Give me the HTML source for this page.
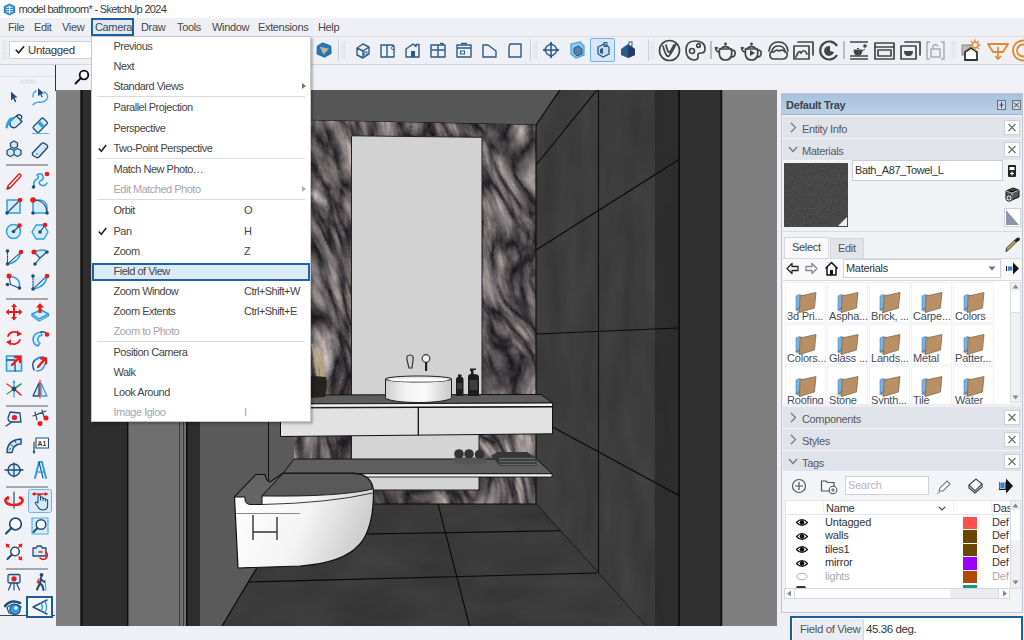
<!DOCTYPE html><html><head><meta charset="utf-8"><style>
*{margin:0;padding:0;box-sizing:border-box}
html,body{width:1024px;height:640px;overflow:hidden;background:#eff0f5;font-family:"Liberation Sans",sans-serif;font-size:11px;color:#333}
.a{position:absolute}
.t{position:absolute;white-space:nowrap;font-size:11px;letter-spacing:-0.45px}
#title{left:0;top:0;width:1024px;height:18px;background:#fff}
#menubar{left:0;top:18px;width:1024px;height:18px;background:#eef0f5}
#menubar span{position:absolute;top:3px;font-size:11px;letter-spacing:-0.35px;color:#474747}
#tb1{left:0;top:36px;width:1024px;height:29px;background:#eff0f5;border-top:1px solid #dcdee4;border-bottom:1px solid #d3d5db}
#row2{left:0;top:65px;width:1024px;height:26px;background:#f0f1f6}
#left{left:0;top:76px;width:55px;height:540px;background:#f1f2f7;border-bottom:1px solid #444;border-top:1px solid #e2e4ea}
#status{left:0;top:626px;width:1024px;height:14px;background:#eff0f5}
#tray{left:781px;top:93px;width:242px;height:520px;background:#f2f3f7;border-left:1px solid #c9ccd4}
#menu{left:91px;top:36px;width:220px;height:386px;background:#fff;border:1px solid #c6c6c6;box-shadow:2px 2px 2px rgba(0,0,0,.25)}
.mi{position:absolute;left:21.5px;font-size:11px;letter-spacing:-0.5px;color:#454545;white-space:nowrap}
.sc{position:absolute;left:152px;font-size:11px;letter-spacing:-0.55px;color:#454545;white-space:nowrap}
.dis{color:#a4a4ac}
.sep{position:absolute;left:5px;width:208px;height:1px;background:#dadada}
.vsep{position:absolute;width:1px;background:#d0d2d8}
.grip{position:absolute;width:5px;background-image:radial-gradient(#dcdee3 0.8px,transparent 0.9px);background-size:2.5px 2.5px}
</style></head><body>
<div id="title" class="a">
<svg class="a" style="left:3px;top:3px" width="13" height="13" viewBox="0 0 13 13"><path d="M6.5 0.5 L12.2 3.3 V9.7 L6.5 12.5 L0.8 9.7 V3.3Z" fill="#2f86c8"/><path d="M3.2 4.2 H9.8 M2.8 6.5 H10.2 M3.2 8.8 H9.8 M6.5 2.2 V10.8" stroke="#fff" stroke-width="0.9"/></svg>
<span class="t" style="left:18.5px;top:3px;font-size:11px;letter-spacing:-0.68px;color:#3a3a3a">model bathroom* - SketchUp 2024</span>
</div>
<div id="menubar" class="a">
<span style="left:8px">File</span>
<span style="left:34px">Edit</span>
<span style="left:62px">View</span>
<div class="a" style="left:91px;top:0;width:43px;height:18px;border:2px solid #1f5fa3;background:#dfe9f5"></div>
<span style="left:95px">Camera</span>
<span style="left:141px">Draw</span>
<span style="left:177px">Tools</span>
<span style="left:212px">Window</span>
<span style="left:258px">Extensions</span>
<span style="left:318px">Help</span>
</div>
<div id="tb1" class="a"></div>
<div class="grip" style="left:2px;top:40px;height:20px"></div>
<div class="a" style="left:9px;top:41px;width:110px;height:18px;background:#fff;border:1px solid #cfd1d6"></div>
<svg class="a" style="left:15px;top:45px" width="10" height="9" viewBox="0 0 10 9"><path d="M0.8 4.8 L3.6 7.8 L9.2 1.2" stroke="#222" stroke-width="1.6" fill="none"/></svg>
<span class="t" style="left:28px;top:44px;font-size:11.5px;letter-spacing:-0.4px;color:#3a3a3a">Untagged</span>
<svg class="a" style="left:316px;top:42px" width="16" height="16" viewBox="0 0 16 16"><path d="M6.5 0.8 L14.8 4 L15.2 11.5 L8.5 15.2 L1 12 L1.2 4.2Z" fill="#1f78bd" stroke="#1a5a8c" stroke-width="0.8"/><path d="M3.8 4.8 L13 6.8 L7.5 12.8Z" fill="#c7b48a"/></svg>
<div class="vsep" style="left:338px;top:39px;height:22px"></div>
<div class="grip" style="left:341px;top:41px;height:18px"></div>
<svg class="a" style="left:354px;top:42px" width="18" height="18" viewBox="0 0 18 18"><path d="M3 6 L9 2 L15 5 V12 L9 16 L3 13Z M3 6 L9 9 L15 5 M9 9 V16" stroke="#2b5a87" stroke-width="1.4" fill="none" stroke-linejoin="round"/><rect x="10" y="10" width="3" height="3" fill="none" stroke="#2b5a87" stroke-width="1"/></svg>
<svg class="a" style="left:379px;top:42px" width="18" height="18" viewBox="0 0 18 18"><path d="M2 3 H13 Q15 3 15 5 V15 H2Z M8 3 V15" stroke="#2b5a87" stroke-width="1.4" fill="none" stroke-linejoin="round"/><circle cx="14" cy="6" r="1.5" fill="#fff" stroke="#2b5a87" stroke-width="1"/></svg>
<svg class="a" style="left:404px;top:42px" width="18" height="18" viewBox="0 0 18 18"><path d="M2 15 V7 L9 2 L12 4.5 V2.5 H15 V15Z" stroke="#2b5a87" stroke-width="1.4" fill="none" stroke-linejoin="round"/><rect x="7" y="9" width="4" height="6" fill="#2b5a87"/></svg>
<svg class="a" style="left:429px;top:42px" width="18" height="18" viewBox="0 0 18 18"><rect x="2" y="3" width="14" height="12" stroke="#2b5a87" stroke-width="1.4" fill="none" stroke-linejoin="round"/><path d="M9 3 V15 M2 8 H16 M11 1.5 H14 V3" stroke="#2b5a87" stroke-width="1.4" fill="none" stroke-linejoin="round"/></svg>
<svg class="a" style="left:455px;top:42px" width="18" height="18" viewBox="0 0 18 18"><rect x="2" y="3" width="14" height="12" stroke="#2b5a87" stroke-width="1.4" fill="none" stroke-linejoin="round"/><path d="M2 6 H16 M6 1.5 H12" stroke="#2b5a87" stroke-width="1.4" fill="none" stroke-linejoin="round"/><rect x="5.5" y="9" width="4" height="3" fill="none" stroke="#2b5a87" stroke-width="1"/></svg>
<svg class="a" style="left:481px;top:42px" width="18" height="18" viewBox="0 0 18 18"><path d="M2 15 V3 H7 L15 9 V15Z" stroke="#2b5a87" stroke-width="1.4" fill="none" stroke-linejoin="round"/></svg>
<svg class="a" style="left:506px;top:42px" width="18" height="18" viewBox="0 0 18 18"><path d="M4 2 H15 V15 H3 V5Z" stroke="#2b5a87" stroke-width="1.4" fill="none" stroke-linejoin="round"/></svg>
<div class="vsep" style="left:530px;top:39px;height:22px"></div>
<div class="grip" style="left:533px;top:41px;height:18px"></div>
<svg class="a" style="left:542px;top:41px" width="18" height="18" viewBox="0 0 18 18"><circle cx="9" cy="9" r="5.5" stroke="#2b5a87" stroke-width="1.4" fill="none" stroke-linejoin="round"/><path d="M9 1 V17 M1 9 H17" stroke="#2b5a87" stroke-width="1.6"/><path d="M1 9 L3.5 7 V11Z M17 9 L14.5 7 V11Z M9 1 L7 3.5 H11Z M9 17 L7 14.5 H11Z" fill="#2b5a87"/></svg>
<svg class="a" style="left:568px;top:41px" width="18" height="18" viewBox="0 0 18 18"><path d="M3 3 L12 1 L16 5 V14 L8 17 L3 13Z" fill="#8cc9ee" stroke="#3aa3e3" stroke-width="1.2"/><path d="M6 7 L11 5 L14 8 V13 L9 15 L6 12Z" fill="#5b7fa0" stroke="#2b5a87" stroke-width="1"/></svg>
<div class="a" style="left:590px;top:38px;width:25px;height:24px;background:#d6e8f8;border:1px solid #6db1e8;border-radius:2px"></div>
<svg class="a" style="left:594px;top:41px" width="18" height="18" viewBox="0 0 18 18"><path d="M4 6 L10 3 L15 6 V13 L9 16 L4 13Z" fill="#c9dbe9" stroke="#2b5a87" stroke-width="1.3"/><path d="M6 8 L9 7 V13 L6 12Z" fill="#2b5a87"/><rect x="10" y="1.5" width="3" height="4" fill="none" stroke="#2b5a87" stroke-width="1"/></svg>
<svg class="a" style="left:619px;top:41px" width="18" height="18" viewBox="0 0 18 18"><path d="M2 8 L9 3 L16 8 V14 L9 17 L2 14Z" fill="#2b5a87"/><path d="M9 3 L16 8 V14 L9 17Z" fill="#1d3f63"/><rect x="10" y="1" width="3" height="4" fill="#fff" stroke="#2b5a87" stroke-width="1"/></svg>
<div class="vsep" style="left:648px;top:39px;height:22px"></div>
<div class="grip" style="left:650px;top:41px;height:18px"></div>
<svg class="a" style="left:658px;top:39px" width="23" height="23" viewBox="0 0 23 23"><circle cx="11.5" cy="11.5" r="10" stroke="#454545" stroke-width="1.7" fill="none" stroke-linejoin="round" stroke-linecap="round"/><path d="M5 7 Q8 19 11 17 Q14 13 18 5" stroke="#454545" stroke-width="1.7" fill="none" stroke-linejoin="round" stroke-linecap="round"/><path d="M8 6 Q10 15 12 13 Q14 10 16 6" stroke="#454545" stroke-width="1.7" fill="none" stroke-linejoin="round" stroke-linecap="round"/></svg>
<svg class="a" style="left:684px;top:39px" width="23" height="23" viewBox="0 0 23 23"><path d="M11 2 Q21 2 21 10 Q21 14 17 14 Q13 14 14 18 Q14 21 10 21 Q2 20 2 11 Q2 2 11 2Z" stroke="#454545" stroke-width="1.7" fill="none" stroke-linejoin="round" stroke-linecap="round"/><circle cx="8" cy="12" r="2.5" stroke="#454545" stroke-width="1.7" fill="none" stroke-linejoin="round" stroke-linecap="round"/><circle cx="14.5" cy="6.5" r="1.8" stroke="#454545" stroke-width="1.7" fill="none" stroke-linejoin="round" stroke-linecap="round"/></svg>
<div class="a" style="left:710px;top:41px;width:2px;height:18px;background:#bdbdbd"></div>
<svg class="a" style="left:714px;top:39px" width="23" height="23" viewBox="0 0 23 23"><path d="M5.5 10 Q4 21 11.5 21 Q19 21 17.5 10Z" stroke="#454545" stroke-width="1.7" fill="none" stroke-linejoin="round" stroke-linecap="round"/><path d="M6.5 10 Q11.5 5 16.5 10" stroke="#454545" stroke-width="1.7" fill="none" stroke-linejoin="round" stroke-linecap="round"/><circle cx="11.5" cy="5" r="1.4" fill="#454545"/><path d="M5.5 13 Q2 13 1.5 8.5 L3.5 9" stroke="#454545" stroke-width="1.7" fill="none" stroke-linejoin="round" stroke-linecap="round"/><path d="M17.5 11 Q22 11 21 15.5 Q20 18.5 16.5 18" stroke="#454545" stroke-width="1.7" fill="none" stroke-linejoin="round" stroke-linecap="round"/></svg>
<svg class="a" style="left:740px;top:39px" width="23" height="23" viewBox="0 0 23 23"><path d="M5.5 10 Q4 21 11.5 21 Q19 21 17.5 10Z" stroke="#454545" stroke-width="1.7" fill="none" stroke-linejoin="round" stroke-linecap="round"/><path d="M6.5 10 Q11.5 5 16.5 10" stroke="#454545" stroke-width="1.7" fill="none" stroke-linejoin="round" stroke-linecap="round"/><circle cx="11.5" cy="5" r="1.4" fill="#454545"/><path d="M5.5 13 Q2 13 1.5 8.5 L3.5 9" stroke="#454545" stroke-width="1.7" fill="none" stroke-linejoin="round" stroke-linecap="round"/><path d="M17.5 11 Q22 11 21 15.5 Q20 18.5 16.5 18" stroke="#454545" stroke-width="1.7" fill="none" stroke-linejoin="round" stroke-linecap="round"/><path d="M10 11 L15 14 L10 17Z" fill="#454545"/></svg>
<svg class="a" style="left:767px;top:39px" width="23" height="23" viewBox="0 0 23 23"><path d="M2 12 Q3 3 11.5 3 Q20 3 21 12 M5 12 Q6 7 11.5 7 Q17 7 18 12 M3 16 Q3 12 7 13 Q9 10 12 12 Q16 10 18 13 Q21 13 20 17 Q19 20 16 20 H7 Q3 20 3 16Z" stroke="#454545" stroke-width="1.7" fill="none" stroke-linejoin="round" stroke-linecap="round"/></svg>
<svg class="a" style="left:792px;top:39px" width="23" height="23" viewBox="0 0 23 23"><rect x="2" y="7" width="15" height="13" stroke="#454545" stroke-width="1.7" fill="none" stroke-linejoin="round" stroke-linecap="round"/><path d="M6 3 H21 V16" stroke="#454545" stroke-width="1.7" fill="none" stroke-linejoin="round" stroke-linecap="round"/><path d="M4 18 Q7 10 9 14 Q12 9 15 15" stroke="#454545" stroke-width="1.7" fill="none" stroke-linejoin="round" stroke-linecap="round"/></svg>
<svg class="a" style="left:818px;top:39px" width="23" height="23" viewBox="0 0 23 23"><path d="M19 7 A9 9 0 1 0 19 16" stroke="#454545" stroke-width="2.2" fill="none"/><path d="M12 7 A5 5 0 1 0 16 13 L12 12Z" fill="#454545"/></svg>
<div class="a" style="left:843px;top:41px;width:2px;height:18px;background:#bdbdbd"></div>
<svg class="a" style="left:848px;top:39px" width="23" height="23" viewBox="0 0 23 23"><path d="M2 3 H20 M2 20 H20 M2 17 H20" stroke="#454545" stroke-width="1.6"/><path d="M6 11 H14 Q14 15 12 16 H8 Q6 15 6 11Z M9 10 Q10 8 11 10 M14 12 L17 10" fill="#454545" stroke="#454545" stroke-width="1"/><circle cx="17" cy="7" r="1.8" fill="#454545"/></svg>
<svg class="a" style="left:873px;top:39px" width="23" height="23" viewBox="0 0 23 23"><rect x="2" y="4" width="19" height="16" stroke="#454545" stroke-width="1.7" fill="none" stroke-linejoin="round" stroke-linecap="round"/><path d="M2 8 H21" stroke="#454545" stroke-width="1.7" fill="none" stroke-linejoin="round" stroke-linecap="round"/><rect x="5" y="11" width="13" height="6" stroke="#454545" stroke-width="1.7" fill="none" stroke-linejoin="round" stroke-linecap="round"/></svg>
<svg class="a" style="left:899px;top:39px" width="23" height="23" viewBox="0 0 23 23"><rect x="2" y="7" width="15" height="13" stroke="#454545" stroke-width="1.7" fill="none" stroke-linejoin="round" stroke-linecap="round"/><path d="M6 3 H21 V16" stroke="#454545" stroke-width="1.7" fill="none" stroke-linejoin="round" stroke-linecap="round"/><path d="M5 12 H14 Q14 16 11 17 H8 Q5 16 5 12Z" fill="#454545"/></svg>
<svg class="a" style="left:925px;top:39px" width="21" height="23" viewBox="0 0 21 23"><path d="M5 3 H2 V20 H5 M16 3 H19 V20 H16" stroke="#a8a8a8" stroke-width="1.4" fill="none"/><rect x="6" y="10" width="9" height="8" stroke="#a8a8a8" stroke-width="1.4" fill="none"/><path d="M8 10 V7 Q10.5 4 13 7" stroke="#a8a8a8" stroke-width="1.4" fill="none"/></svg>
<div class="grip" style="left:951px;top:41px;height:18px"></div>
<svg class="a" style="left:959px;top:39px" width="24" height="23" viewBox="0 0 24 23"><rect x="3" y="6" width="8" height="10" fill="#bbb" stroke="#888"/><path d="M6 21 V13 L12 9 L18 13 V21Z" fill="#fff" stroke="#333" stroke-width="1.8"/><circle cx="16" cy="6" r="3" fill="none" stroke="#e0892e" stroke-width="1.5"/><path d="M16 0.5 V2 M16 10 V11.5 M10.5 6 H12 M20 6 H21.5 M12 2 L13 3 M19 9 L20 10 M20 2 L19 3" stroke="#e0892e" stroke-width="1.3"/></svg>
<svg class="a" style="left:986px;top:39px" width="24" height="23" viewBox="0 0 24 23"><path d="M2 5 H22 L17 13 H7Z" stroke="#e0892e" stroke-width="1.8" fill="none" stroke-linejoin="round"/><path d="M12 8 V20 M9 17 L12 20 L15 17" stroke="#e0892e" stroke-width="1.6" fill="none"/></svg>
<svg class="a" style="left:1011px;top:39px" width="13" height="23" viewBox="0 0 13 23"><circle cx="12" cy="11.5" r="10" stroke="#e0892e" stroke-width="1.8" fill="none"/><circle cx="12" cy="11.5" r="6" stroke="#e0892e" stroke-width="1.8" fill="none"/></svg>
<div id="row2" class="a"></div>
<div class="a" style="left:55px;top:65px;width:37px;height:26px;background:#f1f2f7;border-left:1px solid #333"></div>
<svg class="a" style="left:74px;top:69px" width="16" height="16" viewBox="0 0 16 16"><circle cx="10" cy="6" r="4.3" stroke="#111" stroke-width="1.8" fill="#fff"/><path d="M7 9 L1.5 14.5" stroke="#111" stroke-width="1.9" stroke-linecap="round"/></svg>
<div id="left" class="a"></div>
<div class="a" style="left:20px;top:79px;width:15px;height:5px;background-image:radial-gradient(#d8dadf 0.8px,transparent 0.9px);background-size:2.5px 2.5px"></div>
<div class="a" style="left:6px;top:164px;width:42px;height:2px;background:#a4a6ab"></div>
<div class="a" style="left:6px;top:297.5px;width:42px;height:2px;background:#a4a6ab"></div>
<div class="a" style="left:6px;top:404.5px;width:42px;height:2px;background:#a4a6ab"></div>
<div class="a" style="left:6px;top:485.5px;width:42px;height:2px;background:#a4a6ab"></div>
<div class="a" style="left:6px;top:567.5px;width:42px;height:2px;background:#a4a6ab"></div>
<div class="a" style="left:28.4px;top:489px;width:24px;height:24px;background:#d9e9f7;border:1px solid #73b3e7;border-radius:2.5px"></div>
<div class="a" style="left:26px;top:596px;width:26.5px;height:22px;border:2.5px solid #1c5a98;background:#f4f6fa"></div>
<svg class="a" style="left:3.6999999999999993px;top:87.4px" width="20" height="20" viewBox="0 0 20 20"><path d="M7 4.5 L13.5 10.5 L10.5 10.8 L12.3 14.5 L11 15.2 L9.2 11.5 L7 13.5Z" fill="#1f4d78"/></svg>
<svg class="a" style="left:30.0px;top:87.4px" width="20" height="20" viewBox="0 0 20 20"><path d="M8 1 L14 6.5 L11.3 6.8 L12.8 10 L11.7 10.6 L10.2 7.4 L8 9.3Z" fill="#1f4d78"/><path d="M14 5 Q19 7 17 12 Q14 16 8 15 Q4 16 2.5 18.5 M6 4 Q2 6 3.5 11" stroke="#2f9fe2" stroke-width="1.4" fill="none" stroke-linejoin="round" stroke-linecap="round" stroke-dasharray="1.5 1.3"/></svg>
<svg class="a" style="left:3.6999999999999993px;top:112.3px" width="20" height="20" viewBox="0 0 20 20"><path d="M7 8 L12.5 4 L18 9.5 L12 15 Q9 17 6.5 14 Q5 11 7 8Z" fill="#d6ebf8" stroke="#1f4d78" stroke-width="1.3" fill="none" stroke-linejoin="round" stroke-linecap="round"/><path d="M12.5 4 Q15 1.5 17.5 4 Q18.5 6 16 8" stroke="#1f4d78" stroke-width="1.2" fill="none" stroke-linejoin="round" stroke-linecap="round"/><path d="M8.5 5 Q2.5 6 1.5 16 L3.5 16.5 Q5 10 9.5 8Z" fill="#2f9fe2"/></svg>
<svg class="a" style="left:30.0px;top:113.5px" width="20" height="20" viewBox="0 0 20 20"><path d="M3.5 12.5 L11.5 4.5 Q12.5 3.5 13.5 4.5 L17 8 Q18 9 17 10 L9 18 Q8 18.8 7 18 L3.5 14.5 Q2.5 13.5 3.5 12.5Z" fill="#d6ebf8" stroke="#1f4d78" stroke-width="1.3" fill="none" stroke-linejoin="round" stroke-linecap="round"/><path d="M7 9 L12.5 14.5 L15 12 L9.5 6.5Z" fill="#2f9fe2"/><path d="M2.5 20 H18.5" stroke="#2f9fe2" stroke-width="1.5" fill="none" stroke-linejoin="round" stroke-linecap="round"/></svg>
<svg class="a" style="left:3.6999999999999993px;top:139.0px" width="20" height="20" viewBox="0 0 20 20"><path d="M10 2 L13.5 4 V7.5 L10 9.5 L6.5 7.5 V4Z M6.5 9.5 L10 11.5 V15.5 L6.5 17.5 L3 15.5 V11.5Z M13.5 9.5 L17 11.5 V15.5 L13.5 17.5 L10 15.5 V11.5Z" fill="#d6ebf8" stroke="#1f4d78" stroke-width="1.3" fill="none" stroke-linejoin="round" stroke-linecap="round"/></svg>
<svg class="a" style="left:30.0px;top:140.4px" width="20" height="20" viewBox="0 0 20 20"><path d="M2.5 13 L11.5 3.5 Q12.5 2.5 14 3 L17 5 Q18 6 17.5 7.5 L9 17 Q8 18 6.5 17.5 L3 15.5 Q2 14.5 2.5 13Z" fill="#d6ebf8" stroke="#1f4d78" stroke-width="1.4" fill="none" stroke-linejoin="round" stroke-linecap="round"/><circle cx="7" cy="14" r="0.9" fill="#2f9fe2"/></svg>
<svg class="a" style="left:3.6999999999999993px;top:170.5px" width="20" height="20" viewBox="0 0 20 20"><path d="M4 15 L14.5 3.5 Q15.5 2.5 16.5 3.5 Q17.5 4.5 16.5 5.5 L6 17 L3 18Z" fill="#fff" stroke="#f01818" stroke-width="1.4" fill="none" stroke-linejoin="round" stroke-linecap="round"/><path d="M3 18 L4 15 L6 17Z" fill="#1f4d78"/></svg>
<svg class="a" style="left:30.0px;top:170.5px" width="20" height="20" viewBox="0 0 20 20"><path d="M4 15 Q3 10 7 8 Q10 6 7 4 Q11 1 13 5 Q14 9 10 10 Q8 12 11 14 Q15 16 17 12" stroke="#2f9fe2" stroke-width="1.6" fill="none" stroke-linejoin="round" stroke-linecap="round"/><circle cx="3.5" cy="16" r="1.8" fill="#1f4d78"/><circle cx="17" cy="3" r="2.3" fill="#f01818"/></svg>
<svg class="a" style="left:3.6999999999999993px;top:195.5px" width="20" height="20" viewBox="0 0 20 20"><rect x="3" y="4" width="13" height="13" fill="#d6ebf8" stroke="#2f9fe2" stroke-width="1.5" fill="none" stroke-linejoin="round" stroke-linecap="round"/><path d="M3 17 L16 4" stroke="#1f4d78" stroke-width="1.2" fill="none" stroke-linejoin="round" stroke-linecap="round"/><circle cx="3" cy="17" r="1.8" fill="#1f4d78"/><circle cx="16" cy="4" r="2.3" fill="#f01818"/></svg>
<svg class="a" style="left:30.0px;top:195.5px" width="20" height="20" viewBox="0 0 20 20"><path d="M3 17 V4 H9 Q16 4 17 11 V17Z" fill="#d6ebf8" stroke="#2f9fe2" stroke-width="1.5" fill="none" stroke-linejoin="round" stroke-linecap="round"/><path d="M3 4 Q16 4 17 17" stroke="#1f4d78" stroke-width="1.2" fill="none" stroke-linejoin="round" stroke-linecap="round"/><circle cx="3" cy="4" r="2.8" fill="#f01818"/><circle cx="3" cy="17" r="1.8" fill="#1f4d78"/><circle cx="17" cy="17" r="1.8" fill="#1f4d78"/></svg>
<svg class="a" style="left:3.6999999999999993px;top:220.5px" width="20" height="20" viewBox="0 0 20 20"><circle cx="9.5" cy="10.5" r="7" fill="#d6ebf8" stroke="#2f9fe2" stroke-width="1.5" fill="none" stroke-linejoin="round" stroke-linecap="round"/><path d="M9.5 10.5 L15 5" stroke="#1f4d78" stroke-width="1.1" fill="none" stroke-linejoin="round" stroke-linecap="round"/><circle cx="9.5" cy="10.5" r="1.8" fill="#1f4d78"/><circle cx="15.5" cy="4.5" r="2.3" fill="#f01818"/></svg>
<svg class="a" style="left:30.0px;top:220.5px" width="20" height="20" viewBox="0 0 20 20"><path d="M6 4 H14 L18 11 L14 18 H6 L2 11Z" fill="#d6ebf8" stroke="#2f9fe2" stroke-width="1.5" fill="none" stroke-linejoin="round" stroke-linecap="round"/><path d="M10 11 L15 4" stroke="#1f4d78" stroke-width="1.1" fill="none" stroke-linejoin="round" stroke-linecap="round"/><circle cx="10" cy="11" r="1.8" fill="#1f4d78"/><circle cx="15" cy="4" r="2.3" fill="#f01818"/></svg>
<svg class="a" style="left:3.6999999999999993px;top:246.5px" width="20" height="20" viewBox="0 0 20 20"><path d="M3.5 17 Q14 16 17 5" stroke="#2f9fe2" stroke-width="1.6" fill="none" stroke-linejoin="round" stroke-linecap="round"/><path d="M3.5 4 V17 M3.5 17 L17 5" stroke="#1f4d78" stroke-width="1.1" fill="none" stroke-linejoin="round" stroke-linecap="round" stroke-dasharray="1.4 1.2"/><circle cx="3.5" cy="4" r="1.8" fill="#1f4d78"/><circle cx="3.5" cy="17" r="1.8" fill="#1f4d78"/><circle cx="17" cy="5" r="2.3" fill="#f01818"/></svg>
<svg class="a" style="left:30.0px;top:246.5px" width="20" height="20" viewBox="0 0 20 20"><path d="M4 5 Q14 1 17 5 L10 17Z" fill="#d6ebf8"/><path d="M4 5 Q14 1 17 5" stroke="#2f9fe2" stroke-width="1.6" fill="none" stroke-linejoin="round" stroke-linecap="round"/><path d="M4 5 L10 11 L17 5 M10 11 L5 17" stroke="#1f4d78" stroke-width="1.1" fill="none" stroke-linejoin="round" stroke-linecap="round"/><circle cx="4" cy="5" r="2.5" fill="#f01818"/><circle cx="17" cy="5" r="1.8" fill="#1f4d78"/><circle cx="5" cy="17" r="1.8" fill="#1f4d78"/></svg>
<svg class="a" style="left:3.6999999999999993px;top:271.5px" width="20" height="20" viewBox="0 0 20 20"><path d="M5 4 Q18 6 15 16" stroke="#2f9fe2" stroke-width="1.6" fill="none" stroke-linejoin="round" stroke-linecap="round"/><path d="M5 4 L6.5 12.5 L15 16" stroke="#1f4d78" stroke-width="1.1" fill="none" stroke-linejoin="round" stroke-linecap="round"/><circle cx="5" cy="4" r="2.5" fill="#f01818"/><circle cx="3.5" cy="12.5" r="1.8" fill="#1f4d78"/><circle cx="15.5" cy="16" r="1.8" fill="#1f4d78"/></svg>
<svg class="a" style="left:30.0px;top:271.5px" width="20" height="20" viewBox="0 0 20 20"><path d="M3 17 V5 Q15 5 17 4 Q17 14 3 17Z" fill="#d6ebf8"/><path d="M3 4 V17 M3 17 L17 4" stroke="#1f4d78" stroke-width="1.1" fill="none" stroke-linejoin="round" stroke-linecap="round" stroke-dasharray="1.4 1.2"/><path d="M3 17 Q16 15 17 4" stroke="#2f9fe2" stroke-width="1.6" fill="none" stroke-linejoin="round" stroke-linecap="round"/><circle cx="3" cy="4" r="1.8" fill="#1f4d78"/><circle cx="3" cy="17" r="1.8" fill="#1f4d78"/><circle cx="17" cy="4" r="2.3" fill="#f01818"/></svg>
<svg class="a" style="left:3.6999999999999993px;top:301.7px" width="20" height="20" viewBox="0 0 20 20"><path d="M10 1.5 L13 5 H11 V9 H15 V7 L18.5 10 L15 13 V11 H11 V15 H13 L10 18.5 L7 15 H9 V11 H5 V13 L1.5 10 L5 7 V9 H9 V5 H7Z" fill="#f01818"/></svg>
<svg class="a" style="left:30.0px;top:301.7px" width="20" height="20" viewBox="0 0 20 20"><path d="M2 12 L11 8 L18.5 12 L9 17Z" fill="#d6ebf8" stroke="#2f9fe2" stroke-width="1.5" fill="none" stroke-linejoin="round" stroke-linecap="round"/><path d="M2 12 V14 L9 19 L18.5 14 V12" stroke="#2f9fe2" stroke-width="1.3" fill="none" stroke-linejoin="round" stroke-linecap="round"/><path d="M10 1 L14 5.5 H11.5 V11 H8.5 V5.5 H6Z" fill="#f01818"/></svg>
<svg class="a" style="left:3.6999999999999993px;top:328.4px" width="20" height="20" viewBox="0 0 20 20"><path d="M15.5 6 A7 7 0 0 0 4 8" stroke="#f01818" stroke-width="1.8" fill="none" stroke-linejoin="round" stroke-linecap="round"/><path d="M4.5 14 A7 7 0 0 0 16 12" stroke="#f01818" stroke-width="1.8" fill="none" stroke-linejoin="round" stroke-linecap="round"/><path d="M13 2.5 L18 6 L13 8.5Z M7 17.5 L2 14 L7 11.5Z" fill="#f01818"/></svg>
<svg class="a" style="left:30.0px;top:328.4px" width="20" height="20" viewBox="0 0 20 20"><path d="M11 4 Q3 5 3 12 Q4 17 8 18 L10 15 Q7 13 8 10 Q9 7 12 7.5Z" fill="#d6ebf8" stroke="#2f9fe2" stroke-width="1.5" fill="none" stroke-linejoin="round" stroke-linecap="round"/><path d="M11 4 Q15 3 17 6" stroke="#1f4d78" stroke-width="1.3" fill="none" stroke-linejoin="round" stroke-linecap="round"/><circle cx="17" cy="6.5" r="2.3" fill="#f01818"/></svg>
<svg class="a" style="left:3.6999999999999993px;top:353.3px" width="20" height="20" viewBox="0 0 20 20"><rect x="2.5" y="3" width="15" height="15" fill="#d6ebf8" stroke="#2f9fe2" stroke-width="1.6" fill="none" stroke-linejoin="round" stroke-linecap="round"/><path d="M2.5 7 H11 V18" stroke="#1f4d78" stroke-width="1.3" fill="none" stroke-linejoin="round" stroke-linecap="round"/><path d="M8 12 L15 5 M11 4 H16 V9" stroke="#f01818" stroke-width="2.4" fill="none" stroke-linejoin="round" stroke-linecap="round"/></svg>
<svg class="a" style="left:30.0px;top:353.3px" width="20" height="20" viewBox="0 0 20 20"><path d="M4 17 Q0 8 9 5" stroke="#1f4d78" stroke-width="1.4" fill="none" stroke-linejoin="round" stroke-linecap="round"/><path d="M7 18 Q13 18 15 11" stroke="#2f9fe2" stroke-width="1.6" fill="none" stroke-linejoin="round" stroke-linecap="round"/><path d="M5 7 Q11 2 15 5" stroke="#2f9fe2" stroke-width="1.6" fill="none" stroke-linejoin="round" stroke-linecap="round"/><path d="M8 14 L14 7 M11 5.5 H16 V10.5" stroke="#f01818" stroke-width="2.3" fill="none" stroke-linejoin="round" stroke-linecap="round"/></svg>
<svg class="a" style="left:3.6999999999999993px;top:379.0px" width="20" height="20" viewBox="0 0 20 20"><path d="M10 10 V2 M10 10 V18" stroke="#2f9fe2" stroke-width="1.2" fill="none" stroke-linejoin="round" stroke-linecap="round"/><path d="M10 10 L17 5" stroke="#27a34a" stroke-width="1.6" fill="none" stroke-linejoin="round" stroke-linecap="round"/><path d="M10 10 L3 15" stroke="#27a34a" stroke-width="1.2" fill="none" stroke-linejoin="round" stroke-linecap="round" stroke-dasharray="1 1"/><path d="M10 10 L17 16" stroke="#f01818" stroke-width="1.6" fill="none" stroke-linejoin="round" stroke-linecap="round"/><path d="M10 10 L3 5" stroke="#f01818" stroke-width="1.2" fill="none" stroke-linejoin="round" stroke-linecap="round" stroke-dasharray="1 1"/><path d="M10 1 L8.5 4 H11.5Z" fill="#2f9fe2"/><circle cx="10" cy="10" r="2.4" fill="#1f4d78"/></svg>
<svg class="a" style="left:30.0px;top:379.0px" width="20" height="20" viewBox="0 0 20 20"><path d="M9 4 L3 17 H9Z" fill="#d6ebf8" stroke="#1f4d78" stroke-width="1.3" fill="none" stroke-linejoin="round" stroke-linecap="round"/><path d="M11 4 L17 17 H11Z" fill="#d6ebf8" stroke="#2f9fe2" stroke-width="1.3" fill="none" stroke-linejoin="round" stroke-linecap="round"/><path d="M10 1 V19" stroke="#f01818" stroke-width="1.1" fill="none" stroke-linejoin="round" stroke-linecap="round" stroke-dasharray="1.4 1"/></svg>
<svg class="a" style="left:3.6999999999999993px;top:408.7px" width="20" height="20" viewBox="0 0 20 20"><path d="M6 3 L16 4 L17 13 L8 13 Q4 13 4 9Z" fill="#d6ebf8" stroke="#1f4d78" stroke-width="1.3" fill="none" stroke-linejoin="round" stroke-linecap="round"/><circle cx="10.5" cy="8.5" r="2.6" fill="#f01818"/><path d="M8 13 L2 17" stroke="#1f4d78" stroke-width="1.3" fill="none" stroke-linejoin="round" stroke-linecap="round"/></svg>
<svg class="a" style="left:30.0px;top:408.7px" width="20" height="20" viewBox="0 0 20 20"><path d="M3 7 L16 2 M5 3 L7 11 M12 1 L14 8" stroke="#1f4d78" stroke-width="1.1" fill="none" stroke-linejoin="round" stroke-linecap="round"/><path d="M8 5 L10 4" stroke="#1f4d78" stroke-width="0.9" fill="none" stroke-linejoin="round" stroke-linecap="round"/><circle cx="16" cy="9" r="2.5" fill="#f01818"/><circle cx="10" cy="14.5" r="2.5" fill="#f01818"/></svg>
<svg class="a" style="left:3.6999999999999993px;top:434.5px" width="20" height="20" viewBox="0 0 20 20"><path d="M3 17.5 Q3 5 17 4 L17 9 Q9 9 8 17.5Z" fill="#d6ebf8" stroke="#1f4d78" stroke-width="1.5" fill="none" stroke-linejoin="round" stroke-linecap="round"/><path d="M5 15 L7 13 M7 10 L9 11 M11 6 L12 8" stroke="#1f4d78" stroke-width="1" fill="none" stroke-linejoin="round" stroke-linecap="round"/></svg>
<svg class="a" style="left:30.0px;top:434.5px" width="20" height="20" viewBox="0 0 20 20"><rect x="6" y="3" width="12.5" height="10" fill="#fff" stroke="#1f4d78" stroke-width="1.1" fill="none" stroke-linejoin="round" stroke-linecap="round"/><text x="7.6" y="11" font-size="6.8" font-family="Liberation Sans" font-weight="bold" fill="#333">A1</text><path d="M4 7 V18" stroke="#1f4d78" stroke-width="1.2" fill="none" stroke-linejoin="round" stroke-linecap="round"/><path d="M2.5 16 L4 19 L5.5 16Z" fill="#1f4d78"/></svg>
<svg class="a" style="left:3.6999999999999993px;top:460.3px" width="20" height="20" viewBox="0 0 20 20"><circle cx="10" cy="10" r="6" fill="#d6ebf8" stroke="#1f4d78" stroke-width="1.4" fill="none" stroke-linejoin="round" stroke-linecap="round"/><path d="M1 10 H19 M10 3 V17" stroke="#1f4d78" stroke-width="1.3" fill="none" stroke-linejoin="round" stroke-linecap="round"/><path d="M18.5 10 L15.5 8 V12Z" fill="#1f4d78"/></svg>
<svg class="a" style="left:30.0px;top:460.3px" width="20" height="20" viewBox="0 0 20 20"><path d="M5 18 L9 2 H12 L16 18" stroke="#2f9fe2" stroke-width="2" fill="none" stroke-linejoin="round" stroke-linecap="round"/><path d="M9 2 L13 18" stroke="#1f4d78" stroke-width="1.1" fill="none" stroke-linejoin="round" stroke-linecap="round"/><path d="M7 12 H14" stroke="#2f9fe2" stroke-width="1.4" fill="none" stroke-linejoin="round" stroke-linecap="round"/></svg>
<svg class="a" style="left:3.6999999999999993px;top:489.5px" width="20" height="20" viewBox="0 0 20 20"><path d="M10 2 V18" stroke="#1f4d78" stroke-width="1.2" fill="none" stroke-linejoin="round" stroke-linecap="round"/><path d="M4 7.5 Q1 9 1.5 11 Q3 15 10 15 Q17 15 18.5 11 Q19 9 16 7.5" stroke="#f01818" stroke-width="2.6" fill="none" stroke-linejoin="round" stroke-linecap="round"/><path d="M1 9 L4 6 L5 10Z" fill="#f01818"/></svg>
<svg class="a" style="left:30.0px;top:491.0px" width="20" height="20" viewBox="0 0 20 20"><path d="M8 11 V5.5 Q8 4 9.3 4 Q10.5 4 10.5 5.5 V9 V7 Q10.5 6 11.7 6 Q13 6 13 7 V9.5 V8 Q13 7.2 14.2 7.2 Q15.5 7.2 15.5 8.2 V10 V9.3 Q15.5 8.5 16.5 8.5 Q17.6 8.5 17.6 9.5 V14 Q17.6 19 13 19 Q9.5 19 8 16 L5.5 12.5 Q5 11 6.5 11 Q7.5 11 8 12Z" fill="#d6ebf8" stroke="#1f4d78" stroke-width="1.1" fill="none" stroke-linejoin="round" stroke-linecap="round"/><path d="M3 3 H17" stroke="#f01818" stroke-width="1.5" fill="none" stroke-linejoin="round" stroke-linecap="round"/><path d="M2 3 L5 1 V5Z M18 3 L15 1 V5Z" fill="#f01818"/></svg>
<svg class="a" style="left:3.6999999999999993px;top:516.3px" width="20" height="20" viewBox="0 0 20 20"><circle cx="11.5" cy="8" r="5.8" fill="#fff" stroke="#1f4d78" stroke-width="1.7" fill="none" stroke-linejoin="round" stroke-linecap="round"/><path d="M7.5 12 L2 17.5" stroke="#1f4d78" stroke-width="2.2" fill="none" stroke-linejoin="round" stroke-linecap="round"/></svg>
<svg class="a" style="left:30.0px;top:516.3px" width="20" height="20" viewBox="0 0 20 20"><rect x="2" y="2" width="16" height="16" fill="#d6ebf8" stroke="#2f9fe2" stroke-width="1.1" fill="none" stroke-linejoin="round" stroke-linecap="round" stroke-dasharray="1.4 1.2"/><circle cx="11" cy="8.5" r="4.8" fill="#fff" stroke="#1f4d78" stroke-width="1.5" fill="none" stroke-linejoin="round" stroke-linecap="round"/><path d="M7.5 12 L3.5 16" stroke="#1f4d78" stroke-width="2" fill="none" stroke-linejoin="round" stroke-linecap="round"/></svg>
<svg class="a" style="left:3.6999999999999993px;top:542.0px" width="20" height="20" viewBox="0 0 20 20"><circle cx="11" cy="9.5" r="4.3" fill="#fff" stroke="#1f4d78" stroke-width="1.5" fill="none" stroke-linejoin="round" stroke-linecap="round"/><path d="M8 12.5 L3.5 17" stroke="#1f4d78" stroke-width="1.9" fill="none" stroke-linejoin="round" stroke-linecap="round"/><path d="M1.5 1.5 L6 2.5 L2.5 6Z M18.5 1.5 L14 2.5 L17.5 6Z M18.5 18.5 L14 17.5 L17.5 14Z" fill="#f01818"/><path d="M3 3 L5 5 M17 3 L15 5 M17 17 L15 15" stroke="#f01818" stroke-width="1.5" fill="none" stroke-linejoin="round" stroke-linecap="round"/></svg>
<svg class="a" style="left:30.0px;top:542.0px" width="20" height="20" viewBox="0 0 20 20"><path d="M3 6 H6 L7.5 4 H11 L12.5 6 H16 V14 H3Z" fill="#d6ebf8" stroke="#1f4d78" stroke-width="1.3" fill="none" stroke-linejoin="round" stroke-linecap="round"/><path d="M9 10 H12" stroke="#f01818" stroke-width="1.4" fill="none" stroke-linejoin="round" stroke-linecap="round"/><path d="M16 10 Q19 14 15 17 Q12 18 10 16" stroke="#f01818" stroke-width="1.6" fill="none" stroke-linejoin="round" stroke-linecap="round"/></svg>
<svg class="a" style="left:3.6999999999999993px;top:572.0px" width="20" height="20" viewBox="0 0 20 20"><rect x="4" y="2.5" width="12" height="8.5" rx="1.5" fill="#d6ebf8" stroke="#1f4d78" stroke-width="1.3" fill="none" stroke-linejoin="round" stroke-linecap="round"/><circle cx="10" cy="6.8" r="2.6" fill="#f01818"/><path d="M7.5 11 L4.5 18 M10 11 V18 M12.5 11 L15.5 18" stroke="#1f4d78" stroke-width="1.2" fill="none" stroke-linejoin="round" stroke-linecap="round"/></svg>
<svg class="a" style="left:30.0px;top:572.0px" width="20" height="20" viewBox="0 0 20 20"><circle cx="11.5" cy="3" r="1.9" fill="#1f4d78"/><path d="M11 5.5 L10 11 L7 17.5 M10 11 L12.5 14 L13.5 18 M11 7.5 L14.5 10" stroke="#1f4d78" stroke-width="2.1" fill="none" stroke-linejoin="round" stroke-linecap="round"/><path d="M8.5 5.5 L6.5 11 L9 11.5Z" fill="#f01818"/><path d="M15 8 L16 18.5" stroke="#2f9fe2" stroke-width="1" fill="none" stroke-linejoin="round" stroke-linecap="round"/></svg>
<svg class="a" style="left:3.6999999999999993px;top:598.0px" width="20" height="20" viewBox="0 0 20 20"><path d="M3 9.5 Q10 3 17 9 Q12 18 5 15Z" fill="#fff" stroke="#1f4d78" stroke-width="1.2" fill="none" stroke-linejoin="round" stroke-linecap="round"/><circle cx="11" cy="11.5" r="5.2" fill="#2f9fe2" stroke="#1f4d78" stroke-width="1.1"/><circle cx="12" cy="10" r="1.8" fill="#fff"/><path d="M1 8 Q7 1 16 5" stroke="#1f4d78" stroke-width="2.6" fill="none" stroke-linejoin="round" stroke-linecap="round"/><path d="M1 8 L3 6" stroke="#1f4d78" stroke-width="2" fill="none" stroke-linejoin="round" stroke-linecap="round"/></svg>
<svg class="a" style="left:29.5px;top:597.0px" width="20" height="20" viewBox="0 0 20 20"><path d="M17 3 L3 10 L17 17" stroke="#1f4d78" stroke-width="1.4" fill="none" stroke-linejoin="round" stroke-linecap="round"/><path d="M11 6 Q13.5 10 11 14 M15 4.5 Q18 10 15 15.5" stroke="#2f9fe2" stroke-width="1.5" fill="none" stroke-linejoin="round" stroke-linecap="round" stroke-dasharray="2 1.1"/></svg>
<svg class="a" style="left:56px;top:90px" width="721" height="536" viewBox="56 90 721 536">
<defs>
<filter id="marb" x="240" y="60" width="360" height="500" filterUnits="userSpaceOnUse" color-interpolation-filters="sRGB">
<feTurbulence type="fractalNoise" baseFrequency="0.014 0.007" numOctaves="2" seed="4" result="low"/>
<feTurbulence type="turbulence" baseFrequency="0.055 0.018" numOctaves="5" seed="9" result="hi"/>
<feDisplacementMap in="hi" in2="low" scale="60" xChannelSelector="R" yChannelSelector="G" result="d"/>
<feColorMatrix in="d" type="matrix" values="0.92 0 0 0 0.05  0.87 0 0 0 0.045  0.83 0 0 0 0.065  0 0 0 0 1"/>
</filter>
<filter id="wallt" x="56" y="90" width="721" height="536" filterUnits="userSpaceOnUse" color-interpolation-filters="sRGB">
<feTurbulence type="fractalNoise" baseFrequency="0.05 0.012" numOctaves="3" seed="3" result="t"/>
<feColorMatrix in="t" type="matrix" values="0.14 0 0 0 0.17  0.14 0 0 0 0.17  0.14 0 0 0 0.17  0 0 0 0 1"/>
</filter>
<filter id="floort" x="56" y="90" width="721" height="536" filterUnits="userSpaceOnUse" color-interpolation-filters="sRGB">
<feTurbulence type="fractalNoise" baseFrequency="0.015 0.04" numOctaves="3" seed="17" result="t"/>
<feColorMatrix in="t" type="matrix" values="0.13 0 0 0 0.165  0.13 0 0 0 0.165  0.13 0 0 0 0.165  0 0 0 0 1"/>
</filter>
<clipPath id="cpMarble"><polygon points="294,120 536,125 536,504 294,504"/></clipPath>
<clipPath id="cpRW"><polygon points="536,125 559,90 678,90 678,626 646,626 536,504"/></clipPath>
<clipPath id="cpFloor"><polygon points="295,504 536,504 646,626 222,626"/></clipPath>
</defs>
<rect x="56" y="90" width="721" height="536" fill="#2d2d2d"/>
<rect x="56" y="90" width="24.5" height="536" fill="#7f7f7f"/>
<rect x="80.5" y="90" width="2" height="536" fill="#121212"/>
<rect x="127" y="90" width="1.5" height="536" fill="#0e0e0e"/>
<rect x="128.5" y="90" width="58" height="536" fill="#6f6f6f"/>
<rect x="179" y="90" width="1" height="536" fill="#3a3a3a"/>
<rect x="183" y="90" width="1" height="536" fill="#3a3a3a"/>
<rect x="186" y="90" width="1.6" height="536" fill="#0e0e0e"/>
<rect x="200" y="90" width="336" height="536" fill="#5a5a5a"/>
<!-- ceiling -->
<polygon points="200,90 559,90 536,125 294,120 200,118" fill="#565656"/>
<line x1="294" y1="120" x2="536" y2="125" stroke="#111" stroke-width="1"/>
<!-- marble back wall -->
<g clip-path="url(#cpMarble)"><g transform="rotate(-18 415 310)"><rect x="250" y="70" width="340" height="480" filter="url(#marb)"/></g></g>
<!-- right wall -->
<g clip-path="url(#cpRW)"><rect x="536" y="90" width="142" height="536" fill="#3d3d3d"/><rect x="536" y="90" width="142" height="536" filter="url(#wallt)" opacity="0.5"/>
<rect x="655" y="90" width="23" height="536" fill="#2a2a2a" opacity="0.85"/></g>
<rect x="678" y="90" width="2" height="536" fill="#101010"/>
<rect x="680" y="90" width="40.5" height="536" fill="#2f2f2f"/>
<rect x="720.5" y="90" width="1.8" height="536" fill="#101010"/>
<rect x="722.3" y="90" width="55" height="536" fill="#7f7f7f"/>
<g stroke="#0a0a0a" stroke-width="1.1" fill="none">
<line x1="536" y1="125" x2="560" y2="90"/>
<line x1="536" y1="125" x2="536" y2="504"/>
<line x1="598.5" y1="90" x2="598.5" y2="573"/>
<line x1="536" y1="165" x2="597" y2="90"/>
<line x1="536" y1="250" x2="679" y2="159.5"/>
<line x1="536" y1="334" x2="678" y2="328"/>
<line x1="536" y1="418" x2="679" y2="495.5"/>
<line x1="536" y1="504" x2="646" y2="626"/>
</g>
<!-- mirror panel -->
<polygon points="351.5,135.8 482,137.3 482,406 351.5,406" fill="#d2d2d2" stroke="#222" stroke-width="1"/><rect x="351.5" y="430" width="127.5" height="60" fill="#d4d4d4" stroke="#222" stroke-width="1"/>
<!-- floor -->
<g clip-path="url(#cpFloor)"><rect x="200" y="504" width="450" height="122" fill="#3a3a3a"/><rect x="200" y="504" width="450" height="122" filter="url(#floort)" opacity="0.5"/></g>
<g stroke="#0a0a0a" stroke-width="1.1" fill="none">
<line x1="295" y1="504" x2="536" y2="504"/>
<line x1="295" y1="504" x2="222" y2="626"/>
<line x1="277" y1="535.5" x2="560" y2="530.8"/>
<line x1="249" y1="582" x2="597" y2="573"/>
<line x1="438" y1="504" x2="469.5" y2="626"/>
</g>
<line x1="268.5" y1="90" x2="268.5" y2="482" stroke="#111" stroke-width="1"/>
<!-- vanity top -->
<polygon points="282,395 541,394.5 552.5,403 280,404" fill="#5c5c5c" stroke="#111" stroke-width="1"/>
<polygon points="280,404 552.5,403 552.5,406.5 280,407.5" fill="#f4f4f4" stroke="#111" stroke-width="0.9"/>
<polygon points="280.5,408 552.5,407 552.5,433.8 280.5,436.5" fill="#e2e2e2" stroke="#111" stroke-width="1"/>
<line x1="418.3" y1="407.5" x2="418.3" y2="435.5" stroke="#111" stroke-width="1.3"/>
<!-- lower shelf -->
<polygon points="294,459 536.5,459 552,473.5 283,473.5" fill="#5e5e5e" stroke="#111" stroke-width="1"/>
<rect x="283" y="473.8" width="269" height="3.2" fill="#f2f2f2" stroke="#111" stroke-width="0.9"/>

<!-- vase -->
<path d="M312,344 Q316,360 318,376 M316,350 Q321,362 321,376 M320,348 Q324,362 323,377" stroke="#b9a37e" stroke-width="2.2" fill="none"/>
<path d="M311,376 L326,377 Q328,386 325,397 L311,398Z" fill="#252220"/>
<!-- basin -->
<defs><linearGradient id="bas" x1="0" x2="1"><stop offset="0" stop-color="#cfcfcf"/><stop offset="0.3" stop-color="#f2f2f2"/><stop offset="0.6" stop-color="#fafafa"/><stop offset="1" stop-color="#c8c8c8"/></linearGradient>
<linearGradient id="toil" x1="0" x2="1" y1="0" y2="0.3"><stop offset="0" stop-color="#ffffff"/><stop offset="0.6" stop-color="#f4f4f4"/><stop offset="1" stop-color="#cfcfcf"/></linearGradient></defs>
<path d="M385.5,379 V397.5 A33,5 0 0 0 451.5,397.5 V379Z" fill="url(#bas)" stroke="#222" stroke-width="1"/>
<ellipse cx="418.5" cy="379" rx="33" ry="3" fill="#e6e6e6" stroke="#222" stroke-width="1"/>
<ellipse cx="418.5" cy="380" rx="30" ry="1.6" fill="#fff"/>
<!-- faucets -->
<path d="M407,360 Q406,355 410,355 Q414,355 413,360 L412,368 L409,368Z" fill="none" stroke="#333" stroke-width="1.2"/>
<circle cx="426" cy="358.5" r="3.8" fill="#eee" stroke="#333" stroke-width="1.2"/>
<rect x="425" y="362" width="2.2" height="9" fill="#222"/>
<!-- bottles -->
<path d="M456,380 Q456,377 458,377 L458,374.5 H461.5 V377 Q463.5,377 463.5,380 V396 H456Z" fill="#1c1c1c"/>
<rect x="457" y="383" width="5" height="6" fill="#555" opacity=".6"/>
<path d="M468,377 Q468,374 471,374 V371 H470 V368.5 H476 V370 H473.5 V374 Q479,374 479,377 V396 H468Z" fill="#1c1c1c"/>
<rect x="469.5" y="380" width="8" height="10" fill="#555" opacity=".6"/>
<!-- towels -->
<circle cx="459" cy="454" r="4.8" fill="#333"/><circle cx="469" cy="454" r="4.8" fill="#333"/><circle cx="479.5" cy="454.5" r="4.8" fill="#333"/>
<path d="M454,457 Q459,460 464,457 Q469,460 474,457 Q479,460 485,457 L486,463 Q470,466 454,463Z" fill="#555"/>
<path d="M491,456 L497,452 H527 L536,458 L537,466 H500 Z" fill="#363636"/>
<path d="M499,458.5 H535 M499,461.5 H535.5 M500,464.5 H536.5" stroke="#666" stroke-width="1.3"/>
<!-- toilet -->
<path d="M234.5,497 L256,474.5 L265,474.5 Q265.5,481 270,482 L283,473 L355,473 Q373,475 373.5,492 C373.5,538 360,562 300,566 L238,568 Z" fill="url(#toil)" stroke="#111" stroke-width="1.2"/>
<path d="M234.5,497 L256,474.5 L265,474.5 Q265.5,481 270,482 L283,473.5 L262,496 L262,504.5 L251,504.5 Q245,504.5 245,499 L245,497 Z" fill="#646464" stroke="#111" stroke-width="1"/>
<path d="M283,473.5 L355,473.5 Q371,475 372.5,489 Q340,497 262,496Z" fill="#595959" stroke="#111" stroke-width="0.9"/>
<path d="M262,504.5 Q330,503 372.5,493" stroke="#222" stroke-width="0.9" fill="none"/>
<path d="M236,513.5 L300,513.5" stroke="#8a8a8a" stroke-width="1"/>
<path d="M253,515 V540 M253,532 H277 M277,517 V540" stroke="#333" stroke-width="1.4" fill="none"/>
</svg>
<div id="status" class="a"></div>
<div class="a" style="left:781px;top:93px;width:242px;height:520px;background:#eceef3;border:1px solid #c3c6ce"></div>
<div class="a" style="left:782px;top:94px;width:240px;height:21px;background:linear-gradient(#a7c1dd,#bcd1e7);border-bottom:1px solid #9fb6cf"></div>
<span class="t" style="left:786px;top:99px;font-weight:bold;font-size:11px;letter-spacing:-0.3px;color:#3d4452">Default Tray</span>
<svg class="a" style="left:997px;top:100px" width="9" height="10" viewBox="0 0 9 10"><rect x="0.5" y="0.5" width="8" height="9" fill="#c8d6e6" stroke="#6a7380"/><path d="M4.5 2 V8 M2.5 5 H6.5" stroke="#444" stroke-width="1"/></svg>
<svg class="a" style="left:1012px;top:100px" width="9" height="10" viewBox="0 0 9 10"><rect x="0.5" y="0.5" width="8" height="9" fill="#c8d6e6" stroke="#6a7380"/><path d="M2 2.5 L7 7.5 M7 2.5 L2 7.5" stroke="#444" stroke-width="1"/></svg>
<div class="a" style="left:783px;top:117px;width:238px;height:22px;background:#e1e3ea;border-bottom:1px solid #f4f5f8"></div>
<svg class="a" style="left:790px;top:122px" width="7" height="11" viewBox="0 0 7 11"><path d="M1 1 L5.5 5.5 L1 10" stroke="#767a84" stroke-width="1.3" fill="none"/></svg>
<span class="t" style="left:802px;top:122.5px;font-size:11px;letter-spacing:-0.35px;color:#555a66">Entity Info</span>
<div class="a" style="left:1004px;top:120px;width:16px;height:15px;background:#fdfdfe;border:1px solid #cdd0d6"></div>
<svg class="a" style="left:1007px;top:123px" width="10" height="9" viewBox="0 0 10 9"><path d="M1.5 1 L8.5 8 M8.5 1 L1.5 8" stroke="#6a6a6a" stroke-width="1.1"/></svg>
<div class="a" style="left:783px;top:139px;width:238px;height:22px;background:#e1e3ea;border-bottom:1px solid #f4f5f8"></div>
<svg class="a" style="left:788px;top:146px" width="10" height="7" viewBox="0 0 10 7"><path d="M1 1 L5 5.5 L9 1" stroke="#767a84" stroke-width="1.3" fill="none"/></svg>
<span class="t" style="left:802px;top:144.5px;font-size:11px;letter-spacing:-0.35px;color:#555a66">Materials</span>
<div class="a" style="left:1004px;top:142px;width:16px;height:15px;background:#fdfdfe;border:1px solid #cdd0d6"></div>
<svg class="a" style="left:1007px;top:145px" width="10" height="9" viewBox="0 0 10 9"><path d="M1.5 1 L8.5 8 M8.5 1 L1.5 8" stroke="#6a6a6a" stroke-width="1.1"/></svg>
<div class="a" style="left:783px;top:161px;width:238px;height:245px;background:#f1f2f6"></div>
<div class="a" style="left:784px;top:163px;width:64px;height:64px;background:#474747;border:1px solid #3a3a3a"></div>
<svg class="a" style="left:784px;top:163px" width="64" height="64"><filter id="swt" color-interpolation-filters="sRGB"><feTurbulence type="fractalNoise" baseFrequency="0.6" numOctaves="2" seed="5"/><feColorMatrix type="matrix" values="0.12 0 0 0 0.22  0.12 0 0 0 0.22  0.12 0 0 0 0.22  0 0 0 0 1"/></filter><rect width="64" height="64" filter="url(#swt)"/><path d="M63 54 L63 63 L54 63Z" fill="#eeeeee"/></svg>
<div class="a" style="left:852px;top:160px;width:151px;height:21px;background:#fff;border:1px solid #c9ccd3"></div>
<span class="t" style="left:855px;top:164px;font-size:11px;letter-spacing:-0.4px;color:#333">Bath_A87_Towel_L</span>
<svg class="a" style="left:1005px;top:164px" width="14" height="14" viewBox="0 0 14 14"><rect x="3" y="1" width="8" height="12" rx="1" fill="#222"/><rect x="4.5" y="3" width="5" height="3" fill="#fff"/><path d="M7 7.5 V11.5 M5 9.5 H9" stroke="#fff" stroke-width="1.2"/></svg>
<svg class="a" style="left:1004px;top:186px" width="16" height="16" viewBox="0 0 16 16"><path d="M2 5 L9 2 L15 4 V11 L8 14 L2 12Z" fill="#555" stroke="#111"/><path d="M2 5 L8 7 L15 4 M8 7 V14" stroke="#ddd" stroke-width="0.8"/><circle cx="5" cy="12" r="3.2" fill="#fff" stroke="#111"/><path d="M5 10.2 V13.8 M3.2 12 H6.8" stroke="#111" stroke-width="0.9"/></svg>
<div class="a" style="left:1004px;top:208px;width:17px;height:19px;background:#fff;border:1px solid #cfd2d8"></div>
<svg class="a" style="left:1005px;top:209px" width="15" height="17" viewBox="0 0 15 17"><path d="M1 1 L14 16 H1Z" fill="#8c96a4"/></svg>
<div class="a" style="left:783px;top:231px;width:238px;height:1px;background:#d9dbe1"></div>
<div class="a" style="left:784px;top:237px;width:45px;height:22px;background:#f9f9fb;border:1px solid #d6d8de;border-bottom:none"></div>
<span class="t" style="left:792px;top:241px;font-size:11px;letter-spacing:-0.3px;color:#444">Select</span>
<div class="a" style="left:830px;top:238px;width:34px;height:20px;background:#e3e4ea;border:1px solid #d6d8de;border-bottom:none"></div>
<span class="t" style="left:838px;top:242px;font-size:11px;letter-spacing:-0.3px;color:#555">Edit</span>
<svg class="a" style="left:1004px;top:236px" width="17" height="18" viewBox="0 0 18 18"><path d="M2 16 L3 12 L11 4 L13 6 L5 14Z" fill="#c9a45a" stroke="#333" stroke-width="1"/><path d="M11 4 L13.5 1.5 Q15.5 0.5 16.5 1.5 Q17.5 2.5 16 4.5 L13 6Z" fill="#222"/></svg>
<div class="a" style="left:783px;top:258px;width:238px;height:1px;background:#d6d8de"></div>
<div class="a" style="left:783px;top:259px;width:238px;height:22px;background:#f9f9fb"></div>
<svg class="a" style="left:786px;top:262px" width="13" height="13" viewBox="0 0 13 13"><path d="M1 6.5 L6 1.5 V4.5 H12 V8.5 H6 V11.5Z" fill="#fff" stroke="#222" stroke-width="1.3" stroke-linejoin="round"/></svg>
<svg class="a" style="left:805px;top:262px" width="13" height="13" viewBox="0 0 13 13"><path d="M12 6.5 L7 1.5 V4.5 H1 V8.5 H7 V11.5Z" fill="#fff" stroke="#888" stroke-width="1.3" stroke-linejoin="round"/></svg>
<svg class="a" style="left:824px;top:261px" width="15" height="15" viewBox="0 0 15 15"><path d="M1.5 7.5 L7.5 1.5 L13.5 7.5 M3 6 V14 H12 V6" stroke="#111" stroke-width="1.5" fill="#fff" stroke-linejoin="round"/><rect x="6" y="9" width="3" height="5" fill="#111"/></svg>
<div class="a" style="left:843px;top:259px;width:158px;height:19px;background:#fff;border:1px solid #cfd2d8"></div>
<span class="t" style="left:846px;top:262px;font-size:11px;letter-spacing:-0.3px;color:#333">Materials</span>
<svg class="a" style="left:988px;top:266px" width="8" height="5" viewBox="0 0 8 5"><path d="M0.5 0.5 L4 4.5 L7.5 0.5Z" fill="#777"/></svg>
<svg class="a" style="left:1005px;top:261px" width="15" height="15" viewBox="0 0 15 15"><path d="M1 5 H8 V1.5 L14 7.5 L8 13.5 V10 H1Z" fill="#111"/><rect x="2.5" y="5" width="5" height="5" fill="#3b7fd0" stroke="#fff" stroke-width="0.8"/></svg>
<div class="a" style="left:783px;top:280px;width:238px;height:126px;background:#fff;border-top:1px solid #d6d8de"></div>
<div class="a" style="left:785px;top:282px;width:41px;height:41px;border:1px solid #f0f0f2"></div>
<svg class="a" style="left:794px;top:291px" width="24" height="23" viewBox="0 0 24 23"><path d="M2 5 L5 3.5 L9 4.5 L8 17 L2 19Z" fill="#74b3e3" stroke="#4d86b8" stroke-width="0.6"/><path d="M1 19 L6 22 L8 14Z" fill="#6a6a6a" opacity=".55"/><path d="M6 5 L22 1.5 L20.5 17 L5.5 21.5Z" fill="#b99066" stroke="#7d6040" stroke-width="0.7"/></svg>
<span class="t" style="left:787px;top:310px;font-size:11px;letter-spacing:-0.2px;color:#454b58">3d Pri...</span>
<div class="a" style="left:827px;top:282px;width:41px;height:41px;border:1px solid #f0f0f2"></div>
<svg class="a" style="left:836px;top:291px" width="24" height="23" viewBox="0 0 24 23"><path d="M2 5 L5 3.5 L9 4.5 L8 17 L2 19Z" fill="#74b3e3" stroke="#4d86b8" stroke-width="0.6"/><path d="M1 19 L6 22 L8 14Z" fill="#6a6a6a" opacity=".55"/><path d="M6 5 L22 1.5 L20.5 17 L5.5 21.5Z" fill="#b99066" stroke="#7d6040" stroke-width="0.7"/></svg>
<span class="t" style="left:829px;top:310px;font-size:11px;letter-spacing:-0.2px;color:#454b58">Aspha...</span>
<div class="a" style="left:869px;top:282px;width:41px;height:41px;border:1px solid #f0f0f2"></div>
<svg class="a" style="left:878px;top:291px" width="24" height="23" viewBox="0 0 24 23"><path d="M2 5 L5 3.5 L9 4.5 L8 17 L2 19Z" fill="#74b3e3" stroke="#4d86b8" stroke-width="0.6"/><path d="M1 19 L6 22 L8 14Z" fill="#6a6a6a" opacity=".55"/><path d="M6 5 L22 1.5 L20.5 17 L5.5 21.5Z" fill="#b99066" stroke="#7d6040" stroke-width="0.7"/></svg>
<span class="t" style="left:871px;top:310px;font-size:11px;letter-spacing:-0.2px;color:#454b58">Brick, ...</span>
<div class="a" style="left:911px;top:282px;width:41px;height:41px;border:1px solid #f0f0f2"></div>
<svg class="a" style="left:920px;top:291px" width="24" height="23" viewBox="0 0 24 23"><path d="M2 5 L5 3.5 L9 4.5 L8 17 L2 19Z" fill="#74b3e3" stroke="#4d86b8" stroke-width="0.6"/><path d="M1 19 L6 22 L8 14Z" fill="#6a6a6a" opacity=".55"/><path d="M6 5 L22 1.5 L20.5 17 L5.5 21.5Z" fill="#b99066" stroke="#7d6040" stroke-width="0.7"/></svg>
<span class="t" style="left:913px;top:310px;font-size:11px;letter-spacing:-0.2px;color:#454b58">Carpe...</span>
<div class="a" style="left:953px;top:282px;width:41px;height:41px;border:1px solid #f0f0f2"></div>
<svg class="a" style="left:962px;top:291px" width="24" height="23" viewBox="0 0 24 23"><path d="M2 5 L5 3.5 L9 4.5 L8 17 L2 19Z" fill="#74b3e3" stroke="#4d86b8" stroke-width="0.6"/><path d="M1 19 L6 22 L8 14Z" fill="#6a6a6a" opacity=".55"/><path d="M6 5 L22 1.5 L20.5 17 L5.5 21.5Z" fill="#b99066" stroke="#7d6040" stroke-width="0.7"/></svg>
<span class="t" style="left:955px;top:310px;font-size:11px;letter-spacing:-0.2px;color:#454b58">Colors</span>
<div class="a" style="left:785px;top:324px;width:41px;height:41px;border:1px solid #f0f0f2"></div>
<svg class="a" style="left:794px;top:333px" width="24" height="23" viewBox="0 0 24 23"><path d="M2 5 L5 3.5 L9 4.5 L8 17 L2 19Z" fill="#74b3e3" stroke="#4d86b8" stroke-width="0.6"/><path d="M1 19 L6 22 L8 14Z" fill="#6a6a6a" opacity=".55"/><path d="M6 5 L22 1.5 L20.5 17 L5.5 21.5Z" fill="#b99066" stroke="#7d6040" stroke-width="0.7"/></svg>
<span class="t" style="left:787px;top:352px;font-size:11px;letter-spacing:-0.2px;color:#454b58">Colors...</span>
<div class="a" style="left:827px;top:324px;width:41px;height:41px;border:1px solid #f0f0f2"></div>
<svg class="a" style="left:836px;top:333px" width="24" height="23" viewBox="0 0 24 23"><path d="M2 5 L5 3.5 L9 4.5 L8 17 L2 19Z" fill="#74b3e3" stroke="#4d86b8" stroke-width="0.6"/><path d="M1 19 L6 22 L8 14Z" fill="#6a6a6a" opacity=".55"/><path d="M6 5 L22 1.5 L20.5 17 L5.5 21.5Z" fill="#b99066" stroke="#7d6040" stroke-width="0.7"/></svg>
<span class="t" style="left:829px;top:352px;font-size:11px;letter-spacing:-0.2px;color:#454b58">Glass ...</span>
<div class="a" style="left:869px;top:324px;width:41px;height:41px;border:1px solid #f0f0f2"></div>
<svg class="a" style="left:878px;top:333px" width="24" height="23" viewBox="0 0 24 23"><path d="M2 5 L5 3.5 L9 4.5 L8 17 L2 19Z" fill="#74b3e3" stroke="#4d86b8" stroke-width="0.6"/><path d="M1 19 L6 22 L8 14Z" fill="#6a6a6a" opacity=".55"/><path d="M6 5 L22 1.5 L20.5 17 L5.5 21.5Z" fill="#b99066" stroke="#7d6040" stroke-width="0.7"/></svg>
<span class="t" style="left:871px;top:352px;font-size:11px;letter-spacing:-0.2px;color:#454b58">Lands...</span>
<div class="a" style="left:911px;top:324px;width:41px;height:41px;border:1px solid #f0f0f2"></div>
<svg class="a" style="left:920px;top:333px" width="24" height="23" viewBox="0 0 24 23"><path d="M2 5 L5 3.5 L9 4.5 L8 17 L2 19Z" fill="#74b3e3" stroke="#4d86b8" stroke-width="0.6"/><path d="M1 19 L6 22 L8 14Z" fill="#6a6a6a" opacity=".55"/><path d="M6 5 L22 1.5 L20.5 17 L5.5 21.5Z" fill="#b99066" stroke="#7d6040" stroke-width="0.7"/></svg>
<span class="t" style="left:913px;top:352px;font-size:11px;letter-spacing:-0.2px;color:#454b58">Metal</span>
<div class="a" style="left:953px;top:324px;width:41px;height:41px;border:1px solid #f0f0f2"></div>
<svg class="a" style="left:962px;top:333px" width="24" height="23" viewBox="0 0 24 23"><path d="M2 5 L5 3.5 L9 4.5 L8 17 L2 19Z" fill="#74b3e3" stroke="#4d86b8" stroke-width="0.6"/><path d="M1 19 L6 22 L8 14Z" fill="#6a6a6a" opacity=".55"/><path d="M6 5 L22 1.5 L20.5 17 L5.5 21.5Z" fill="#b99066" stroke="#7d6040" stroke-width="0.7"/></svg>
<span class="t" style="left:955px;top:352px;font-size:11px;letter-spacing:-0.2px;color:#454b58">Patter...</span>
<div class="a" style="left:785px;top:366px;width:41px;height:41px;border:1px solid #f0f0f2"></div>
<svg class="a" style="left:794px;top:375px" width="24" height="23" viewBox="0 0 24 23"><path d="M2 5 L5 3.5 L9 4.5 L8 17 L2 19Z" fill="#74b3e3" stroke="#4d86b8" stroke-width="0.6"/><path d="M1 19 L6 22 L8 14Z" fill="#6a6a6a" opacity=".55"/><path d="M6 5 L22 1.5 L20.5 17 L5.5 21.5Z" fill="#b99066" stroke="#7d6040" stroke-width="0.7"/></svg>
<span class="t" style="left:787px;top:394px;font-size:11px;letter-spacing:-0.2px;color:#454b58">Roofing</span>
<div class="a" style="left:827px;top:366px;width:41px;height:41px;border:1px solid #f0f0f2"></div>
<svg class="a" style="left:836px;top:375px" width="24" height="23" viewBox="0 0 24 23"><path d="M2 5 L5 3.5 L9 4.5 L8 17 L2 19Z" fill="#74b3e3" stroke="#4d86b8" stroke-width="0.6"/><path d="M1 19 L6 22 L8 14Z" fill="#6a6a6a" opacity=".55"/><path d="M6 5 L22 1.5 L20.5 17 L5.5 21.5Z" fill="#b99066" stroke="#7d6040" stroke-width="0.7"/></svg>
<span class="t" style="left:829px;top:394px;font-size:11px;letter-spacing:-0.2px;color:#454b58">Stone</span>
<div class="a" style="left:869px;top:366px;width:41px;height:41px;border:1px solid #f0f0f2"></div>
<svg class="a" style="left:878px;top:375px" width="24" height="23" viewBox="0 0 24 23"><path d="M2 5 L5 3.5 L9 4.5 L8 17 L2 19Z" fill="#74b3e3" stroke="#4d86b8" stroke-width="0.6"/><path d="M1 19 L6 22 L8 14Z" fill="#6a6a6a" opacity=".55"/><path d="M6 5 L22 1.5 L20.5 17 L5.5 21.5Z" fill="#b99066" stroke="#7d6040" stroke-width="0.7"/></svg>
<span class="t" style="left:871px;top:394px;font-size:11px;letter-spacing:-0.2px;color:#454b58">Synth...</span>
<div class="a" style="left:911px;top:366px;width:41px;height:41px;border:1px solid #f0f0f2"></div>
<svg class="a" style="left:920px;top:375px" width="24" height="23" viewBox="0 0 24 23"><path d="M2 5 L5 3.5 L9 4.5 L8 17 L2 19Z" fill="#74b3e3" stroke="#4d86b8" stroke-width="0.6"/><path d="M1 19 L6 22 L8 14Z" fill="#6a6a6a" opacity=".55"/><path d="M6 5 L22 1.5 L20.5 17 L5.5 21.5Z" fill="#b99066" stroke="#7d6040" stroke-width="0.7"/></svg>
<span class="t" style="left:913px;top:394px;font-size:11px;letter-spacing:-0.2px;color:#454b58">Tile</span>
<div class="a" style="left:953px;top:366px;width:41px;height:41px;border:1px solid #f0f0f2"></div>
<svg class="a" style="left:962px;top:375px" width="24" height="23" viewBox="0 0 24 23"><path d="M2 5 L5 3.5 L9 4.5 L8 17 L2 19Z" fill="#74b3e3" stroke="#4d86b8" stroke-width="0.6"/><path d="M1 19 L6 22 L8 14Z" fill="#6a6a6a" opacity=".55"/><path d="M6 5 L22 1.5 L20.5 17 L5.5 21.5Z" fill="#b99066" stroke="#7d6040" stroke-width="0.7"/></svg>
<span class="t" style="left:955px;top:394px;font-size:11px;letter-spacing:-0.2px;color:#454b58">Water</span>
<div class="a" style="left:783px;top:404px;width:238px;height:3px;background:#eceef3"></div>
<div class="a" style="left:1010px;top:282px;width:11px;height:121px;background:#f0f0f2;border:1px solid #dcdde2"></div>
<div class="a" style="left:1011px;top:291px;width:9px;height:22px;background:#fff;border-bottom:1px solid #dcdde2"></div>
<svg class="a" style="left:1012px;top:284px" width="7" height="5" viewBox="0 0 7 5"><path d="M0.5 4.5 L3.5 0.5 L6.5 4.5Z" fill="#888"/></svg>
<svg class="a" style="left:1012px;top:395px" width="7" height="5" viewBox="0 0 7 5"><path d="M0.5 0.5 L3.5 4.5 L6.5 0.5Z" fill="#888"/></svg>
<div class="a" style="left:783px;top:407px;width:238px;height:22px;background:#e1e3ea;border-bottom:1px solid #f4f5f8"></div>
<svg class="a" style="left:790px;top:412px" width="7" height="11" viewBox="0 0 7 11"><path d="M1 1 L5.5 5.5 L1 10" stroke="#767a84" stroke-width="1.3" fill="none"/></svg>
<span class="t" style="left:802px;top:412.5px;font-size:11px;letter-spacing:-0.35px;color:#555a66">Components</span>
<div class="a" style="left:1004px;top:410px;width:16px;height:15px;background:#fdfdfe;border:1px solid #cdd0d6"></div>
<svg class="a" style="left:1007px;top:413px" width="10" height="9" viewBox="0 0 10 9"><path d="M1.5 1 L8.5 8 M8.5 1 L1.5 8" stroke="#6a6a6a" stroke-width="1.1"/></svg>
<div class="a" style="left:783px;top:429px;width:238px;height:22px;background:#e1e3ea;border-bottom:1px solid #f4f5f8"></div>
<svg class="a" style="left:790px;top:434px" width="7" height="11" viewBox="0 0 7 11"><path d="M1 1 L5.5 5.5 L1 10" stroke="#767a84" stroke-width="1.3" fill="none"/></svg>
<span class="t" style="left:802px;top:434.5px;font-size:11px;letter-spacing:-0.35px;color:#555a66">Styles</span>
<div class="a" style="left:1004px;top:432px;width:16px;height:15px;background:#fdfdfe;border:1px solid #cdd0d6"></div>
<svg class="a" style="left:1007px;top:435px" width="10" height="9" viewBox="0 0 10 9"><path d="M1.5 1 L8.5 8 M8.5 1 L1.5 8" stroke="#6a6a6a" stroke-width="1.1"/></svg>
<div class="a" style="left:783px;top:451px;width:238px;height:21px;background:#e1e3ea;border-bottom:1px solid #f4f5f8"></div>
<svg class="a" style="left:788px;top:458px" width="10" height="7" viewBox="0 0 10 7"><path d="M1 1 L5 5.5 L9 1" stroke="#767a84" stroke-width="1.3" fill="none"/></svg>
<span class="t" style="left:802px;top:456.5px;font-size:11px;letter-spacing:-0.35px;color:#555a66">Tags</span>
<div class="a" style="left:1004px;top:454px;width:16px;height:15px;background:#fdfdfe;border:1px solid #cdd0d6"></div>
<svg class="a" style="left:1007px;top:457px" width="10" height="9" viewBox="0 0 10 9"><path d="M1.5 1 L8.5 8 M8.5 1 L1.5 8" stroke="#6a6a6a" stroke-width="1.1"/></svg>
<div class="a" style="left:783px;top:472px;width:238px;height:140px;background:#f3f4f8"></div>
<svg class="a" style="left:791px;top:478px" width="16" height="16" viewBox="0 0 16 16"><circle cx="8" cy="8" r="6.5" stroke="#555" stroke-width="1.2" fill="none"/><path d="M8 4 V12 M4 8 H12" stroke="#555" stroke-width="1.2"/></svg>
<svg class="a" style="left:820px;top:477px" width="18" height="18" viewBox="0 0 18 18"><path d="M1.5 4 H6 L7.5 5.5 H14 V14 H1.5Z" stroke="#555" stroke-width="1.2" fill="none"/><circle cx="13" cy="13" r="3.8" fill="#fff" stroke="#555" stroke-width="1.1"/><path d="M13 11 V15 M11 13 H15" stroke="#555" stroke-width="1"/></svg>
<div class="a" style="left:845px;top:476px;width:84px;height:19px;background:#fff;border:1px solid #cfd2d8"></div>
<span class="t" style="left:848px;top:479px;font-size:11px;letter-spacing:-0.2px;color:#b4b4bc">Search</span>
<svg class="a" style="left:936px;top:478px" width="17" height="17" viewBox="0 0 17 17"><path d="M3 13 L4 10 L11 3 L14 6 L7 13Z" fill="#fff" stroke="#777" stroke-width="1.1"/><path d="M1 16 Q3 14 4 14" stroke="#999" stroke-width="1"/></svg>
<svg class="a" style="left:967px;top:477px" width="17" height="18" viewBox="0 0 17 18"><path d="M2 8 L9 2 L15 7 L8 14Z" fill="#fff" stroke="#444" stroke-width="1.2"/><path d="M2 8 V11 L8 16 L15 10 V7" stroke="#444" stroke-width="1.2" fill="none"/></svg>
<svg class="a" style="left:998px;top:478px" width="16" height="16" viewBox="0 0 16 16"><path d="M1 4 H8 V0.5 L15 8 L8 15.5 V12 H1Z" fill="#111"/><rect x="2" y="4.5" width="5" height="6" fill="#3b7fd0" stroke="#cde" stroke-width="0.8"/></svg>
<div class="a" style="left:785px;top:500px;width:236px;height:89px;background:#fff;border:1px solid #e3e4e8"></div>
<div class="a" style="left:786px;top:501px;width:224px;height:14px;background:#fff;border-bottom:1px solid #e4e5ea"></div>
<div class="a" style="left:823px;top:501px;width:1px;height:14px;background:#eceef2"></div>
<div class="a" style="left:953px;top:501px;width:1px;height:14px;background:#eceef2"></div>
<div class="a" style="left:991px;top:501px;width:1px;height:14px;background:#eceef2"></div>
<span class="t" style="left:826px;top:502px;font-size:11px;letter-spacing:-0.2px;color:#333">Name</span>
<svg class="a" style="left:938px;top:506px" width="8" height="5" viewBox="0 0 8 5"><path d="M0.8 0.8 L4 4 L7.2 0.8" stroke="#444" stroke-width="1.2" fill="none"/></svg>
<span class="t" style="left:993px;top:502px;font-size:11px;letter-spacing:-0.2px;color:#333">Das</span>
<span class="t" style="left:825px;top:515.5px;font-size:11px;letter-spacing:-0.2px;color:#333">Untagged</span>
<span class="t" style="left:992px;top:515.5px;font-size:11px;letter-spacing:-0.2px;color:#333">Def</span>
<svg class="a" style="left:796px;top:518.0px" width="12" height="9" viewBox="0 0 12 9"><path d="M0.5 4.5 Q6 -1.5 11.5 4.5 Q6 10.5 0.5 4.5Z" fill="#fff" stroke="#111" stroke-width="1.2"/><circle cx="6" cy="4.5" r="2.4" fill="#111"/></svg>
<div class="a" style="left:963px;top:516.5px;width:14px;height:12.6px;background:#ff5050"></div>
<span class="t" style="left:825px;top:529.1px;font-size:11px;letter-spacing:-0.2px;color:#333">walls</span>
<span class="t" style="left:992px;top:529.1px;font-size:11px;letter-spacing:-0.2px;color:#333">Def</span>
<svg class="a" style="left:796px;top:531.6px" width="12" height="9" viewBox="0 0 12 9"><path d="M0.5 4.5 Q6 -1.5 11.5 4.5 Q6 10.5 0.5 4.5Z" fill="#fff" stroke="#111" stroke-width="1.2"/><circle cx="6" cy="4.5" r="2.4" fill="#111"/></svg>
<div class="a" style="left:963px;top:530.1px;width:14px;height:12.6px;background:#6b4600"></div>
<span class="t" style="left:825px;top:542.7px;font-size:11px;letter-spacing:-0.2px;color:#333">tiles1</span>
<span class="t" style="left:992px;top:542.7px;font-size:11px;letter-spacing:-0.2px;color:#333">Def</span>
<svg class="a" style="left:796px;top:545.2px" width="12" height="9" viewBox="0 0 12 9"><path d="M0.5 4.5 Q6 -1.5 11.5 4.5 Q6 10.5 0.5 4.5Z" fill="#fff" stroke="#111" stroke-width="1.2"/><circle cx="6" cy="4.5" r="2.4" fill="#111"/></svg>
<div class="a" style="left:963px;top:543.7px;width:14px;height:12.6px;background:#6b4600"></div>
<span class="t" style="left:825px;top:556.3px;font-size:11px;letter-spacing:-0.2px;color:#333">mirror</span>
<span class="t" style="left:992px;top:556.3px;font-size:11px;letter-spacing:-0.2px;color:#333">Def</span>
<svg class="a" style="left:796px;top:558.8px" width="12" height="9" viewBox="0 0 12 9"><path d="M0.5 4.5 Q6 -1.5 11.5 4.5 Q6 10.5 0.5 4.5Z" fill="#fff" stroke="#111" stroke-width="1.2"/><circle cx="6" cy="4.5" r="2.4" fill="#111"/></svg>
<div class="a" style="left:963px;top:557.3px;width:14px;height:12.6px;background:#9d00ff"></div>
<span class="t" style="left:825px;top:569.9px;font-size:11px;letter-spacing:-0.2px;color:#a8a8b0">lights</span>
<span class="t" style="left:992px;top:569.9px;font-size:11px;letter-spacing:-0.2px;color:#a8a8b0">Def</span>
<svg class="a" style="left:796px;top:572.4px" width="12" height="9" viewBox="0 0 12 9"><ellipse cx="6" cy="4.5" rx="5.2" ry="3.3" fill="none" stroke="#aaa" stroke-width="1"/></svg>
<div class="a" style="left:963px;top:570.9px;width:14px;height:12.6px;background:#b14900"></div>
<div class="a" style="left:963px;top:584.5px;width:14px;height:5px;background:#139a8a"></div>
<div class="a" style="left:796px;top:586px;width:10px;height:2px;background:#333;border-radius:3px 3px 0 0"></div>
<div class="a" style="left:1010px;top:500px;width:11px;height:89px;background:#f0f0f2;border:1px solid #dcdde2"></div>
<div class="a" style="left:1011px;top:510px;width:9px;height:30px;background:#fff"></div>
<svg class="a" style="left:1012px;top:503px" width="7" height="5" viewBox="0 0 7 5"><path d="M0.5 4.5 L3.5 0.5 L6.5 4.5Z" fill="#888"/></svg>
<svg class="a" style="left:1012px;top:580px" width="7" height="5" viewBox="0 0 7 5"><path d="M0.5 0.5 L3.5 4.5 L6.5 0.5Z" fill="#888"/></svg>
<div class="a" style="left:784px;top:588px;width:226px;height:11px;background:#fff;border:1px solid #d6d8de"></div>
<div class="a" style="left:794px;top:589px;width:1px;height:9px;background:#d6d8de"></div>
<div class="a" style="left:950px;top:589px;width:48px;height:9px;background:#ececef"></div>
<div class="a" style="left:998px;top:589px;width:1px;height:9px;background:#d6d8de"></div>
<svg class="a" style="left:786px;top:590px" width="6" height="7" viewBox="0 0 6 7"><path d="M5 0.5 L1 3.5 L5 6.5Z" fill="#888"/></svg>
<svg class="a" style="left:1002px;top:590px" width="6" height="7" viewBox="0 0 6 7"><path d="M1 0.5 L5 3.5 L1 6.5Z" fill="#888"/></svg>
<div class="a" style="left:790px;top:616px;width:233px;height:26px;background:#fff;border:2.5px solid #1c5d9c"></div>
<div class="a" style="left:792.5px;top:618.5px;width:71px;height:22px;background:#ebecf1;border-right:1px solid #d3d5da"></div>
<span class="t" style="left:800px;top:623px;font-size:11.5px;letter-spacing:-0.4px;color:#555">Field of View</span>
<span class="t" style="left:866px;top:623px;font-size:11.5px;letter-spacing:-0.4px;color:#333">45.36 deg.</span>
<div id="menu" class="a">
<div class="a" style="left:0px;top:225.5px;width:218px;height:18px;border:2px solid #1f64a8;background:#dce9f7"></div>
<span class="mi" style="top:2.7px">Previous</span>
<span class="mi" style="top:22.7px">Next</span>
<span class="mi" style="top:42.7px">Standard Views</span>
<svg class="a" style="left:210px;top:46.0px" width="4" height="6"><path d="M0 0 L4 3 L0 6Z" fill="#777"/></svg>
<div class="sep" style="top:58.5px"></div>
<span class="mi" style="top:64.2px">Parallel Projection</span>
<span class="mi" style="top:84.5px">Perspective</span>
<span class="mi" style="top:104.7px">Two-Point Perspective</span>
<svg class="a" style="left:6px;top:106.5px" width="9" height="9" viewBox="0 0 9 9"><path d="M0.8 4.6 L3.3 7.3 L8.2 1" stroke="#222" stroke-width="1.5" fill="none"/></svg>
<div class="sep" style="top:120.5px"></div>
<span class="mi" style="top:126.2px">Match New Photo&hellip;</span>
<span class="mi dis" style="top:146.1px">Edit Matched Photo</span>
<svg class="a" style="left:210px;top:149.4px" width="4" height="6"><path d="M0 0 L4 3 L0 6Z" fill="#b0b0b0"/></svg>
<div class="sep" style="top:162.2px"></div>
<span class="mi" style="top:167.3px">Orbit</span>
<span class="sc" style="top:167.3px">O</span>
<span class="mi" style="top:187.7px">Pan</span>
<span class="sc" style="top:187.7px">H</span>
<svg class="a" style="left:6px;top:189.5px" width="9" height="9" viewBox="0 0 9 9"><path d="M0.8 4.6 L3.3 7.3 L8.2 1" stroke="#222" stroke-width="1.5" fill="none"/></svg>
<span class="mi" style="top:207.7px">Zoom</span>
<span class="sc" style="top:207.7px">Z</span>
<span class="mi" style="top:227.7px">Field of View</span>
<span class="mi" style="top:247.7px">Zoom Window</span>
<span class="sc" style="top:247.7px">Ctrl+Shift+W</span>
<span class="mi" style="top:267.7px">Zoom Extents</span>
<span class="sc" style="top:267.7px">Ctrl+Shift+E</span>
<span class="mi dis" style="top:287.7px">Zoom to Photo</span>
<div class="sep" style="top:303.5px"></div>
<span class="mi" style="top:309.2px">Position Camera</span>
<span class="mi" style="top:329.2px">Walk</span>
<span class="mi" style="top:349.2px">Look Around</span>
<span class="mi dis" style="top:369.2px">Image Igloo</span>
<span class="sc dis" style="top:369.2px">I</span>
</div>
</body></html>
